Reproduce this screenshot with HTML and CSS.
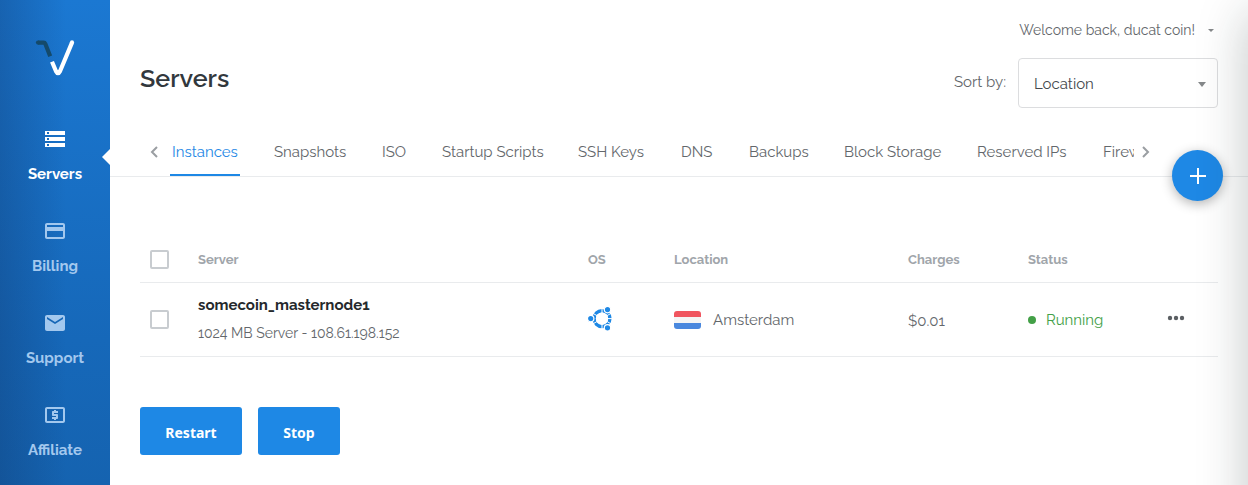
FILE: index.html
```html
<!DOCTYPE html>
<html lang="en">
<head>
<meta charset="utf-8">
<title>Servers</title>
<link rel="stylesheet" href="styles.css">
</head>
<body>
<div class="app">
  <aside class="sidebar">
    <svg class="logo" width="40" height="38" viewBox="0 0 40 38" fill="none" stroke-width="4.2" stroke-linejoin="round">
      <path d="M3 3.6H8.6Q9.8 3.6 10.3 4.8L15.2 17.2" stroke="#144a6b"/>
      <circle cx="3" cy="3.6" r="2.1" fill="#144a6b"/>
      <path d="M17 22.8L21 32.2Q23 36.2 25 32.2L37 3.6" stroke="#fff" stroke-linecap="butt"/>
      <circle cx="37" cy="3.4" r="2.1" fill="#fff"/>
    </svg>
    <nav class="nav">
      <a class="nav-item active">
        <svg width="24" height="24" viewBox="0 0 24 24" fill="currentColor"><path d="M2 20h20v-4H2v4zm2-3h2v2H4v-2zM2 4v4h20V4H2zm4 3H4V5h2v2zm-4 7h20v-4H2v4zm2-3h2v2H4v-2z"/></svg>
        <span class="nav-servers">Servers</span>
      </a>
      <a class="nav-item">
        <svg width="24" height="24" viewBox="0 0 24 24" fill="currentColor"><path d="M20 4H4c-1.11 0-1.99.89-1.99 2L2 18c0 1.11.89 2 2 2h16c1.11 0 2-.89 2-2V6c0-1.11-.89-2-2-2zm0 14H4v-6h16v6zm0-10H4V6h16v2z"/></svg>
        <span class="nav-billing">Billing</span>
      </a>
      <a class="nav-item">
        <svg width="24" height="24" viewBox="0 0 24 24" fill="currentColor"><path d="M20 4H4c-1.1 0-1.99.9-1.99 2L2 18c0 1.1.9 2 2 2h16c1.1 0 2-.9 2-2V6c0-1.1-.9-2-2-2zm0 4l-8 5-8-5V6l8 5 8-5v2z"/></svg>
        <span class="nav-support">Support</span>
      </a>
      <a class="nav-item">
        <svg width="24" height="24" viewBox="0 0 24 24" fill="currentColor"><path d="M11 17h2v-1h1c.55 0 1-.45 1-1v-3c0-.55-.45-1-1-1h-3v-1h4V8h-2V7h-2v1h-1c-.55 0-1 .45-1 1v3c0 .55.45 1 1 1h3v1H9v2h2v1zm9-13H4c-1.11 0-1.99.89-1.99 2L2 18c0 1.11.89 2 2 2h16c1.11 0 2-.89 2-2V6c0-1.11-.89-2-2-2zm0 14H4V6h16v12z"/></svg>
        <span class="nav-affiliate">Affiliate</span>
      </a>
    </nav>
  </aside>
  <main class="main">
    <header class="header">
      <h1 class="title">Servers</h1>
      <div class="header-right">
        <div class="user"><span class="user-name">Welcome back, ducat coin!</span><i class="caret small"></i></div>
        <div class="sort"><span class="sort-label">Sort by:</span><div class="select"><span class="select-value">Location</span><i class="caret"></i></div></div>
      </div>
    </header>
    <div class="tabbar">
      <svg class="arrow" width="8" height="12" viewBox="0 0 8 12"><path d="M7 1L2 6l5 5"/></svg>
      <div class="tabs">
        <a class="tab instances active">Instances</a><a class="tab snapshots">Snapshots</a><a class="tab iso">ISO</a><a class="tab scripts">Startup Scripts</a><a class="tab keys">SSH Keys</a><a class="tab dns">DNS</a><a class="tab backups">Backups</a><a class="tab block">Block Storage</a><a class="tab reserved">Reserved IPs</a><a class="tab firewall">Firewall</a>
      </div>
      <svg class="arrow" width="8" height="12" viewBox="0 0 8 12"><path d="M1 1l5 5-5 5"/></svg>
      <a class="add"><svg width="18" height="18" viewBox="0 0 18 18" stroke="#fff" stroke-width="2"><path d="M1 9h16M9 1v16"/></svg></a>
    </div>
    <section class="table">
      <div class="row head">
        <i class="check"></i>
        <span class="h-server">Server</span><span class="h-os">OS</span><span class="h-location">Location</span><span class="h-charges">Charges</span><span class="h-status">Status</span><span></span>
      </div>
      <div class="row item">
        <i class="check"></i>
        <div class="server"><strong class="server-name">somecoin_masternode1</strong><span class="server-info">1024 MB Server - 108.61.198.152</span></div>
        <svg class="os" width="26" height="26" viewBox="0 0 26 26" fill="#1e88e5">
          <circle cx="14" cy="12.6" r="7.9" fill="none" stroke="#1e88e5" stroke-width="3.4"/>
          <path d="M14 12.6L3 6.2M14 12.6L3 19M14 12.6V0M14 12.6V26M14 12.6L25 6.2M14 12.6L25 19M14 12.6H26" stroke="#fff" stroke-width="1"/>
          <circle cx="14" cy="12.6" r="6.1" fill="#fff"/>
          <g stroke="#fff" stroke-width="1.2"><circle cx="2.7" cy="12.6" r="3.2"/><circle cx="19.5" cy="3.6" r="3.2"/><circle cx="19.5" cy="21.8" r="3.2"/></g>
        </svg>
        <div class="location"><i class="flag"></i><span class="city">Amsterdam</span></div>
        <span class="charge">$0.01</span>
        <div class="status"><i class="dot"></i><span class="running">Running</span></div>
        <svg class="more" width="18" height="6" viewBox="0 0 18 6" fill="#5b5f63"><circle cx="3" cy="3" r="2.2"/><circle cx="9" cy="3" r="2.2"/><circle cx="15" cy="3" r="2.2"/></svg>
      </div>
    </section>
    <div class="actions"><button class="btn restart">Restart</button><button class="btn stop">Stop</button></div>
  </main>
</div>
</body>
</html>
```

FILE: styles.css
```css
* { box-sizing: border-box; }
body { margin: 0; font-family: Raleway, Lato, sans-serif; font-size: 15px; color: #63676b; background: #fff; }
.app { position: relative; display: flex; width: 1248px; height: 485px; overflow: hidden; }
/* shadow cast by the panel beyond the right edge */
.app::after { content: ""; position: absolute; left: 1248px; top: 14px; width: 100px; height: 700px; box-shadow: 0 0 50px rgba(20, 35, 35, .26); pointer-events: none; }

.sidebar { position: relative; width: 110px; flex: none; display: flex; flex-direction: column; align-items: center; padding-top: 39px; background: linear-gradient(to right, rgba(15, 50, 100, .3), rgba(15, 50, 100, 0) 60%), linear-gradient(to bottom, #1b78d2, #1668b9 70%, #1563b0); }
.sidebar::after { content: ""; position: absolute; right: 0; top: 149px; border: 8px solid transparent; border-right-color: #fff; border-left: 0; }
.logo { flex: none; }
.nav { display: flex; flex-direction: column; width: 110px; padding-top: 50px; }
.nav-item { height: 92px; display: flex; flex-direction: column; align-items: center; gap: 13px; color: #a3c8ee; font-weight: 700; line-height: 20px; }
.nav-item svg { flex: none; }
.nav-item.active { color: #fff; }

.main { flex: 1; min-width: 0; }
.header { height: 127px; padding: 20px 30px 0; display: flex; justify-content: space-between; }
.title { margin: 41px 0 0; font-size: 25px; line-height: 34px; font-weight: 600; color: #32383d; }
.header-right { display: flex; flex-direction: column; align-items: flex-end; gap: 18px; }
.user { display: flex; align-items: center; gap: 13px; height: 20px; font-size: 14px; padding-right: 4px; }
.caret { flex: none; border: 4px solid transparent; border-top: 5px solid #85888a; border-bottom: 0; }
.caret.small { border-width: 3px; border-bottom: 0; }
.sort { display: flex; align-items: center; gap: 12px; }
.sort-label { padding-bottom: 3px; }
.select { width: 200px; height: 50px; border: 1px solid #dcdddf; border-radius: 4px; padding: 2px 11px 0 15px; display: flex; align-items: center; justify-content: space-between; color: #45494d; }

.tabbar { position: relative; height: 50px; padding-left: 40px; display: flex; align-items: center; border-bottom: 1px solid #e9ebed; }
.arrow { flex: none; fill: none; stroke: #9a9ea2; stroke-width: 2; }
.tabs { width: 964px; height: 49px; margin: 0 8px 0 12px; display: flex; gap: 32px; overflow: hidden; }
.tab { flex: none; height: 49px; padding: 0 2px; line-height: 50px; white-space: nowrap; }
.tab.active { color: #1e88e5; border-bottom: 2px solid #1e88e5; }
.instances { width: 70px; }
.snapshots { width: 76px; }
.iso { width: 28px; }
.scripts { width: 104px; }
.keys { width: 71px; }
.dns { width: 36px; }
.backups { width: 63px; }
.block { width: 101px; }
.reserved { width: 94px; }
.add { position: absolute; left: 1062px; top: 23px; width: 51px; height: 51px; border-radius: 50%; background: #1e88e5; display: flex; align-items: center; justify-content: center; box-shadow: 0 3px 12px rgba(0, 0, 0, .3); }

.table { margin: 59px 30px 0; }
.row { display: grid; grid-template-columns: 48px 390px 86px 234px 120px 140px 60px; align-items: center; padding-left: 10px; border-bottom: 1px solid #e9ebed; }
.head { height: 47px; font-size: 13px; font-weight: 700; color: #a0a5aa; }
.item { height: 74px; }
.check { width: 19px; height: 19px; border: 2px solid #c8ccd0; border-radius: 2px; }
.server { display: flex; flex-direction: column; gap: 8px; line-height: 20px; padding-bottom: 1px; }
.server-name { font-weight: 700; color: #25292c; }
.server-info { font-size: 14px; }
.os { margin-bottom: 2px; }
.location { display: flex; align-items: center; gap: 12px; padding-top: 1px; }
.flag { width: 27px; height: 18px; border-radius: 3px; background: linear-gradient(#f0555f 6px, #f4f5f5 6px 12px, #4a88de 12px); }
.charge { padding-top: 2px; }
.status { display: flex; align-items: center; gap: 10px; color: #43a047; }
.dot { width: 8px; height: 8px; border-radius: 50%; background: #43a047; }
.more { margin-bottom: 3px; margin-left: -1px; }
.actions { display: flex; gap: 16px; padding: 50px 30px 0; }
.btn { height: 48px; border: 0; border-radius: 3px; background: #1e88e5; color: #fff; font: 700 14px "Noto Sans", sans-serif; padding: 2px 0 0; }
.restart { width: 102px; }
.stop { width: 82px; }
```
